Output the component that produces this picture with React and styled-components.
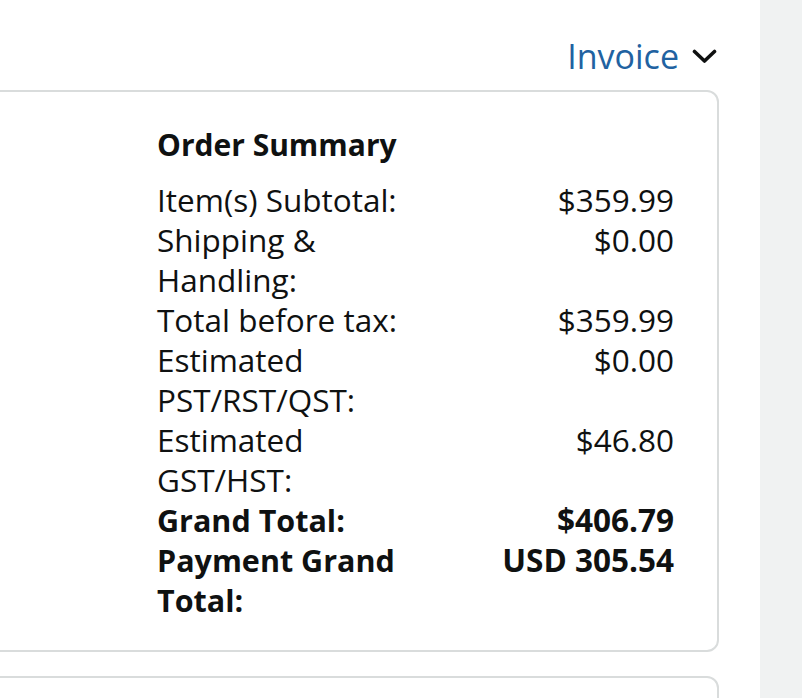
import React from "react";
import styled, { createGlobalStyle } from "styled-components";

const Global = createGlobalStyle`
  html, body { margin: 0; padding: 0; background: #ffffff; }
  body { font-family: "Open Sans", "Noto Sans", sans-serif; color: #0f1111; overflow: hidden; }
`;

const Page = styled.div`
  display: flex;
  width: 802px;
  height: 698px;
  overflow: hidden;
`;

const Main = styled.div`
  flex: 1;
  min-width: 0;
  padding-right: 41px;
  display: flex;
  flex-direction: column;
`;

const Sidebar = styled.div`
  width: 42px;
  flex-shrink: 0;
  background: #f0f2f2;
`;

const Header = styled.div`
  height: 90px;
  flex-shrink: 0;
  display: flex;
  justify-content: flex-end;
  align-items: flex-start;
  padding-top: 33px;
  box-sizing: border-box;
`;

const InvoiceLink = styled.a`
  display: flex;
  align-items: center;
  gap: 13px;
  font-size: 34px;
  line-height: 46px;
  color: #2162a1;
  text-decoration: none;
  cursor: pointer;
  margin-right: 2px;
`;

const Card = styled.div`
  margin-left: -20px;
  border: 2px solid #d9dcdc;
  border-radius: 12px;
  padding: ${(p) => (p.$empty ? "0" : "33px 43px 30px 175px")};
  height: ${(p) => (p.$empty ? "60px" : "auto")};
  flex-shrink: 0;
  margin-bottom: ${(p) => (p.$empty ? "0" : "24px")};
`;

const Title = styled.div`
  font-size: 30px;
  font-weight: 700;
  line-height: 40px;
  margin-bottom: 15px;
`;

const Grid = styled.div`
  display: grid;
  grid-template-columns: 265px 1fr;
  font-size: 31.5px;
  line-height: 40px;
`;

const Label = styled.div`
  font-weight: ${(p) => (p.$bold ? 700 : 400)};
  font-size: ${(p) => (p.$bold ? "30.5px" : "inherit")};
`;

const Value = styled.div`
  text-align: right;
  font-weight: ${(p) => (p.$bold ? 700 : 400)};
  font-size: ${(p) => (p.$bold ? "31.5px" : "inherit")};
`;

const rows = [
  ["Item(s) Subtotal:", "$359.99"],
  ["Shipping & Handling:", "$0.00"],
  ["Total before tax:", "$359.99"],
  ["Estimated PST/RST/QST:", "$0.00"],
  ["Estimated GST/HST:", "$46.80"],
  ["Grand Total:", "$406.79", true],
  ["Payment Grand Total:", "USD 305.54", true],
];

export default function App() {
  return (
    <>
      <Global />
      <Page>
        <Main>
          <Header>
            <InvoiceLink>
              Invoice
              <svg width="25" height="15" viewBox="0 0 25 15" fill="none">
                <path d="M2.5 2.5 L12.5 12 L22.5 2.5" stroke="#0f1111" strokeWidth="3.6" strokeLinecap="round" strokeLinejoin="round" />
              </svg>
            </InvoiceLink>
          </Header>
          <Card>
            <Title>Order Summary</Title>
            <Grid>
              {rows.map(([l, v, b]) => (
                <React.Fragment key={l}>
                  <Label $bold={b}>{l}</Label>
                  <Value $bold={b}>{v}</Value>
                </React.Fragment>
              ))}
            </Grid>
          </Card>
          <Card $empty />
        </Main>
        <Sidebar />
      </Page>
    </>
  );
}
